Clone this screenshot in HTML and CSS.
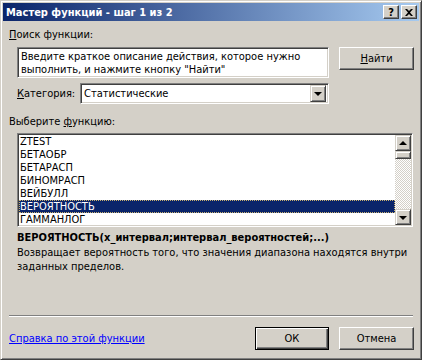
FILE: index.html
```html
<!DOCTYPE html>
<html lang="ru">
<head>
    <meta charset="UTF-8">
    <title>Мастер функций - шаг 1 из 2</title>
    <link rel="stylesheet" href="styles.css">
</head>
<body>
    <div class="window">
        <!-- Title bar -->
        <div class="titlebar">
            <span class="title">Мастер функций - шаг 1 из 2</span>
            <div class="title-buttons">
                <span class="title-btn help">?</span>
                <span class="title-btn close">
                    <svg width="8" height="7" viewBox="0 0 8 7"><path d="M0 0h2l2 2 2-2h2L5 3.5 8 7H6L4 5 2 7H0l3-3.5z" fill="#000"/></svg>
                </span>
            </div>
        </div>

        <div class="content">
            <div class="label first"><u>П</u>оиск функции:</div>
            <div class="search-row">
                <div class="search-box">Введите краткое описание действия, которое нужно<br>выполнить, и нажмите кнопку "Найти"</div>
                <button class="btn"><u>Н</u>айти</button>
            </div>

            <div class="category-row">
                <span class="category-label"><u>К</u>атегория:</span>
                <div class="combo">
                    <span class="combo-value">Статистические</span>
                    <span class="arrow-btn"><span class="tri-down"></span></span>
                </div>
            </div>

            <div class="label choose">Выберите <u>ф</u>ункцию:</div>
            <div class="listbox">
                <ul class="items">
                    <li>ZTEST</li>
                    <li>БЕТАОБР</li>
                    <li>БЕТАРАСП</li>
                    <li>БИНОМРАСП</li>
                    <li>ВЕЙБУЛЛ</li>
                    <li class="selected">ВЕРОЯТНОСТЬ</li>
                    <li>ГАММАНЛОГ</li>
                </ul>
                <div class="scrollbar">
                    <span class="arrow-btn"><span class="tri-up"></span></span>
                    <div class="track">
                        <span class="thumb"></span>
                    </div>
                    <span class="arrow-btn"><span class="tri-down"></span></span>
                </div>
            </div>

            <div class="syntax">ВЕРОЯТНОСТЬ(х_интервал;интервал_вероятностей;...)</div>
            <div class="description">Возвращает вероятность того, что значения диапазона находятся внутри<br>заданных пределов.</div>

            <div class="separator"></div>

            <div class="footer">
                <a class="help-link" href="#">Справка по этой функции</a>
                <div class="footer-buttons">
                    <button class="btn default">ОК</button>
                    <button class="btn">Отмена</button>
                </div>
            </div>
        </div>
    </div>
</body>
</html>
```

FILE: styles.css
```css
:root {
    --face: #d4d0c8;
    --highlight: #ffffff;
    --shadow: #808080;
    --dark: #404040;
    --select: #0a246a;
    --title-end: #a6caf0;
    --font-ui: 'DejaVu Sans Condensed', 'Liberation Sans', sans-serif;
}

body {
    margin: 0;
    padding: 0;
    font-family: var(--font-ui);
    font-size: 11px;
    color: #000;
    background: var(--face);
}

u {
    text-decoration: underline;
}

.window {
    width: 422px;
    height: 360px;
    box-sizing: border-box;
    background: var(--face);
    border: 1px solid;
    border-color: var(--face) var(--dark) var(--dark) var(--face);
    box-shadow: inset 1px 1px var(--highlight), inset -1px -1px var(--shadow);
    padding: 2px;
    overflow: hidden;
    white-space: nowrap;
}

.titlebar {
    height: 18px;
    display: flex;
    align-items: center;
    justify-content: space-between;
    background: linear-gradient(to right, var(--select), var(--title-end));
    color: #fff;
    padding-left: 3px;
}

.title {
    font-weight: bold;
    font-size: 11px;
}

.title-buttons {
    display: flex;
    gap: 2px;
    margin-right: 2px;
}

.title-btn {
    width: 16px;
    height: 14px;
    box-sizing: border-box;
    display: flex;
    align-items: center;
    justify-content: center;
    background: var(--face);
    color: #000;
    font-weight: bold;
    font-size: 11px;
    border: 1px solid;
    border-color: var(--highlight) var(--dark) var(--dark) var(--highlight);
    box-shadow: inset -1px -1px var(--shadow);
}

.content {
    padding: 0 5px 0 6px;
}

.label {
    line-height: 13px;
}

.label.first {
    margin-top: 7px;
}

.label.choose {
    margin-top: 11px;
}

.search-row {
    margin-top: 6px;
    padding-left: 8px;
    display: flex;
    justify-content: space-between;
    align-items: flex-start;
}

.search-box {
    width: 312px;
    height: 31px;
    box-sizing: border-box;
    background: #fff;
    border: 1px solid;
    border-color: var(--shadow) var(--highlight) var(--highlight) var(--shadow);
    box-shadow: inset 1px 1px var(--dark), inset -1px -1px var(--face);
    padding: 2px 3px;
    line-height: 13px;
    overflow: hidden;
}

.btn {
    width: 75px;
    height: 23px;
    box-sizing: border-box;
    font-family: var(--font-ui);
    font-size: 11px;
    color: #000;
    background: var(--face);
    border: 1px solid;
    border-color: var(--highlight) var(--dark) var(--dark) var(--highlight);
    box-shadow: inset -1px -1px var(--shadow);
    padding: 0;
}

.btn.default {
    width: 74px;
    border: 1px solid #000;
    box-shadow: inset 1px 1px var(--highlight), inset -1px -1px var(--dark), inset -2px -2px var(--shadow);
}

.category-row {
    margin-top: 5px;
    padding-left: 8px;
    display: flex;
    align-items: center;
}

.category-label {
    width: 63px;
}

.combo {
    width: 249px;
    height: 21px;
    box-sizing: border-box;
    display: flex;
    align-items: center;
    justify-content: space-between;
    background: #fff;
    border: 1px solid;
    border-color: var(--shadow) var(--highlight) var(--highlight) var(--shadow);
    box-shadow: inset 1px 1px var(--dark), inset -1px -1px var(--face);
    padding: 2px;
}

.combo-value {
    padding-left: 1px;
}

.arrow-btn {
    width: 16px;
    height: 16px;
    box-sizing: border-box;
    display: flex;
    align-items: center;
    justify-content: center;
    background: var(--face);
    border: 1px solid;
    border-color: var(--face) var(--dark) var(--dark) var(--face);
    box-shadow: inset 1px 1px var(--highlight), inset -1px -1px var(--shadow);
}

.combo .arrow-btn {
    height: 17px;
}

.tri-down,
.tri-up {
    width: 0;
    height: 0;
    border-left: 4px solid transparent;
    border-right: 4px solid transparent;
}

.tri-down {
    border-top: 4px solid #000;
    margin-top: 1px;
}

.tri-up {
    border-bottom: 4px solid #000;
}

.listbox {
    margin: 5px 0 0 8px;
    width: 396px;
    height: 94px;
    box-sizing: border-box;
    display: flex;
    background: #fff;
    border: 1px solid;
    border-color: var(--shadow) var(--highlight) var(--highlight) var(--shadow);
    box-shadow: inset 1px 1px var(--dark), inset -1px -1px var(--face);
    padding: 1px;
}

.items {
    list-style: none;
    margin: 0;
    padding: 0;
    flex: 1;
}

.items li {
    height: 13px;
    line-height: 13px;
    padding-left: 1px;
}

.items li.selected {
    background: var(--select);
    color: #fff;
    outline: 1px dotted #c8b070;
    outline-offset: -1px;
}

.scrollbar {
    width: 16px;
    display: flex;
    flex-direction: column;
}

.track {
    flex: 1;
    background: repeating-conic-gradient(#fff 0 25%, var(--face) 0 50%) 0 0 / 2px 2px;
}

.thumb {
    display: block;
    height: 8px;
    box-sizing: border-box;
    background: var(--face);
    border: 1px solid;
    border-color: var(--face) var(--dark) var(--dark) var(--face);
    box-shadow: inset 1px 1px var(--highlight), inset -1px -1px var(--shadow);
}

.syntax {
    margin-top: 4px;
    padding-left: 8px;
    font-weight: bold;
    line-height: 14px;
}

.description {
    margin-top: 1px;
    padding-left: 8px;
    line-height: 14px;
}

.separator {
    margin-top: 41px;
    width: 404px;
    border-top: 1px solid var(--shadow);
    border-bottom: 1px solid var(--highlight);
}

.footer {
    margin-top: 10px;
    display: flex;
    align-items: center;
    justify-content: space-between;
}

.help-link {
    color: #0000ff;
    text-decoration: underline;
}

.footer-buttons {
    display: flex;
    gap: 10px;
}
```
